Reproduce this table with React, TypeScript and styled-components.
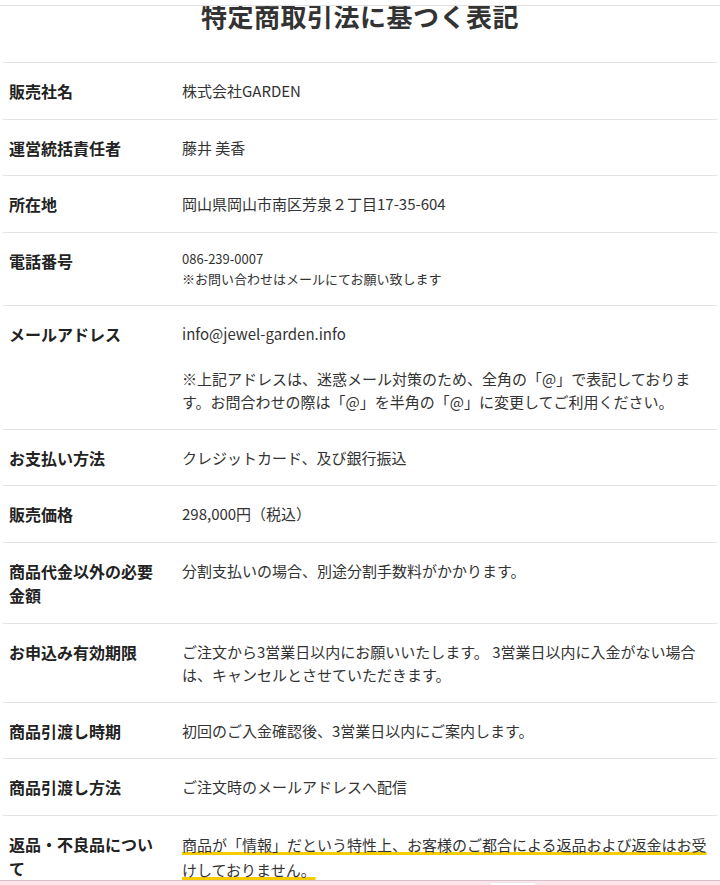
import React from "react";
import styled, { createGlobalStyle } from "styled-components";

const Global = createGlobalStyle`
  html, body { margin: 0; padding: 0; background: #fff; }
  body {
    font-family: "Noto Sans CJK JP", "Noto Sans", sans-serif;
    color: #333;
    -webkit-font-smoothing: antialiased;
  }
`;

const TopBar = styled.header`
  position: fixed;
  top: 0;
  left: 0;
  right: 0;
  height: 5px;
  background: #fff;
  border-bottom: 1px solid #e2e2e2;
  z-index: 5;
`;

const Page = styled.main`
  padding: 3px 3px 40px;
`;

const Title = styled.h1`
  margin: 0 0 33px;
  text-align: center;
  font-size: 26px;
  line-height: 26px;
  font-weight: 700;
  color: #333;
  letter-spacing: 0.5px;
`;

const Table = styled.dl`
  margin: 0;
`;

const Row = styled.div`
  display: grid;
  grid-template-columns: 179px 1fr;
  border-top: 1px solid #e2e2e2;
`;

const Label = styled.dt`
  padding: 16px 24px 15px 6px;
  font-size: 16px;
  line-height: 24.5px;
  font-weight: 700;
  color: #222;
`;

const Value = styled.dd<{ $small?: boolean; $loose?: boolean }>`
  margin: 0;
  padding: 16px 6px 15px 0;
  font-size: ${(p) => (p.$small ? "13px" : "15px")};
  line-height: ${(p) => (p.$small ? "20.5px" : p.$loose ? "25px" : "23.5px")};
  color: #333;
`;

const Para = styled.p`
  margin: 0;
  & + & { margin-top: 21.5px; }
`;

const Marker = styled.span`
  text-decoration: underline;
  text-decoration-color: #f5cc00;
  text-decoration-thickness: 3px;
  text-underline-offset: 1px;
  text-decoration-skip-ink: none;
`;

const Footer = styled.footer`
  position: fixed;
  left: 0;
  right: 0;
  bottom: 0;
  height: 4px;
  background: #fde6ec;
  border-top: 1px solid #d9c0c6;
  z-index: 5;
`;

const FooterButton = styled.div`
  position: absolute;
  left: 489px;
  top: 1px;
  width: 46px;
  height: 20px;
  background: #fff;
  border: 1px solid #f0e4e7;
  border-radius: 4px;
`;

type Item = { label: string; value: React.ReactNode; small?: boolean; loose?: boolean };

const items: Item[] = [
  { label: "販売社名", value: "株式会社GARDEN" },
  { label: "運営統括責任者", value: "藤井 美香" },
  { label: "所在地", value: "岡山県岡山市南区芳泉２丁目17-35-604" },
  {
    label: "電話番号",
    small: true,
    value: (
      <>
        086-239-0007
        <br />
        ※お問い合わせはメールにてお願い致します
      </>
    ),
  },
  {
    label: "メールアドレス",
    value: (
      <>
        <Para>info@jewel-garden.info</Para>
        <Para>
          ※上記アドレスは、迷惑メール対策のため、全角の「@」で表記しております。お問合わせの際は「@」を半角の「@」に変更してご利用ください。
        </Para>
      </>
    ),
  },
  { label: "お支払い方法", value: "クレジットカード、及び銀行振込" },
  { label: "販売価格", value: "298,000円（税込）" },
  { label: "商品代金以外の必要金額", value: "分割支払いの場合、別途分割手数料がかかります。" },
  {
    label: "お申込み有効期限",
    value: "ご注文から3営業日以内にお願いいたします。 3営業日以内に入金がない場合は、キャンセルとさせていただきます。",
  },
  { label: "商品引渡し時期", value: "初回のご入金確認後、3営業日以内にご案内します。" },
  { label: "商品引渡し方法", value: "ご注文時のメールアドレスへ配信" },
  {
    label: "返品・不良品について",
    loose: true,
    value: (
      <Marker>
        商品が「情報」だという特性上、お客様のご都合による返品および返金はお受けしておりません。
      </Marker>
    ),
  },
  {
    label: "動作環境",
    value: "インターネットに接続できるパソコン、スマートフォン、タブレット",
  },
];

export default function App() {
  return (
    <>
      <Global />
      <TopBar />
      <Page>
        <Title>特定商取引法に基つく表記</Title>
        <Table>
          {items.map((it) => (
            <Row key={it.label}>
              <Label>{it.label}</Label>
              <Value $small={it.small} $loose={it.loose}>
                {it.value}
              </Value>
            </Row>
          ))}
        </Table>
      </Page>
      <Footer>
        <FooterButton />
      </Footer>
    </>
  );
}
